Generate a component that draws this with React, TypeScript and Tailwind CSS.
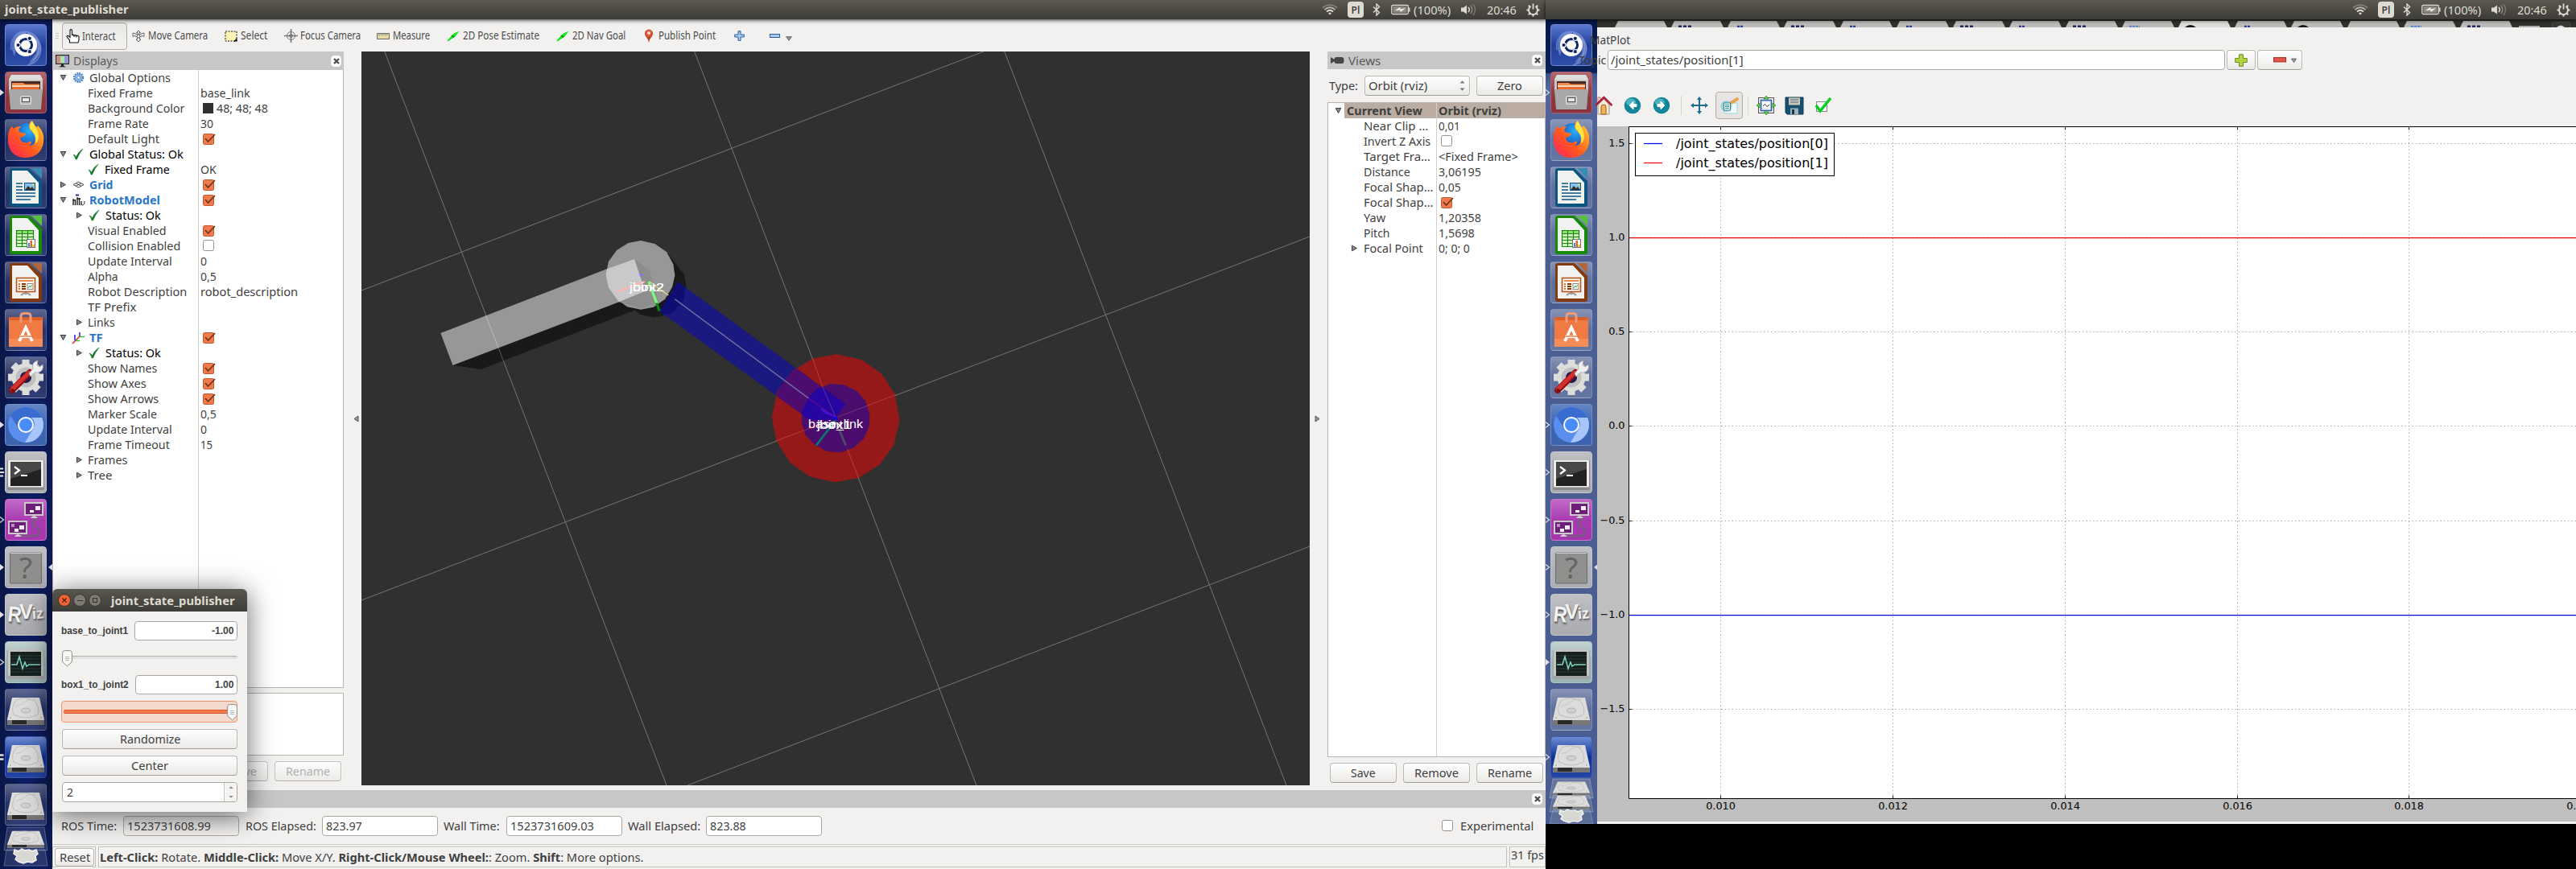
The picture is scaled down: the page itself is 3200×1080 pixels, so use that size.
import React, { useLayoutEffect, useRef, useState } from "react";

/* A line of text squeezed or stretched to a given width. */
function Fit({ w, className = "", children }: { w: number; className?: string; children: React.ReactNode }) {
  const ref = useRef<HTMLSpanElement>(null);
  const [scale, setScale] = useState(1);
  useLayoutEffect(() => {
    if (ref.current) setScale(w / ref.current.offsetWidth);
  }, [w]);
  return (
    <span className={"inline-block shrink-0 whitespace-nowrap text-left " + className} style={{ width: w }}>
      <span ref={ref} className="inline-block origin-left" style={{ transform: `scaleX(${scale})` }}>
        {children}
      </span>
    </span>
  );
}

/* ---------- top panel ---------- */

function Indicators() {
  return (
    <div className="ml-auto flex h-6 shrink-0 items-center pr-[7px] text-[14px] text-[#dfdbd2]">
      <svg width="20" height="16" viewBox="0 0 20 16" fill="none" strokeWidth="1.7">
        <path d="M1 5.5Q10-1.5 19 5.5" stroke="#8a8881" />
        <path d="M3.5 8Q10 2.5 16.500 8" stroke="#b5b2aa" />
        <path d="M6 10.500Q10 7 14 10.500" stroke="#dfdbd2" />
        <path d="M8 12.500Q10 10.500 12 12.500L10 14.500Z" fill="#dfdbd2" />
      </svg>
      <div className="ml-3 flex h-5 w-5 items-center justify-center rounded-sm bg-[#dfdbd2] text-[12px] font-semibold text-[#45433e]">Pl</div>
      <svg className="ml-[11px]" width="10" height="16" viewBox="0 0 10 16" fill="none" stroke="#dfdbd2" strokeWidth="1.4">
        <path d="M1 4.500L8.500 11.500L5 15V1L8.500 4.500L1 11.500" />
      </svg>
      <svg className="ml-[13px]" width="24" height="14" viewBox="0 0 24 14">
        <rect x=".8" y="1.500" width="20.500" height="11" rx="1.500" fill="none" stroke="#dfdbd2" strokeWidth="1.300" />
        <rect x="2.500" y="3.200" width="17" height="7.600" fill="#8c8a83" />
        <path d="M5 8L11 4L12 6.500L18 5L12 10L11 7.500Z" fill="#f3f1ea" />
        <path d="M22.800 4.500V9.500" stroke="#dfdbd2" strokeWidth="1.500" />
      </svg>
      <Fit w={46} className="ml-1">(100%)</Fit>
      <svg className="ml-3" width="21" height="18" viewBox="0 0 21 18" fill="none" strokeWidth="1.500">
        <path d="M1 6.500H4L8 3.500V14.500L4 11.500H1Z" fill="#dfdbd2" />
        <path d="M10 6Q12.500 9 10 12" stroke="#dfdbd2" />
        <path d="M13 4Q16.500 9 13 14" stroke="#8a8881" />
        <path d="M16 2Q21 9 16 16" stroke="#77756e" />
      </svg>
      <Fit w={37} className="ml-3">20:46</Fit>
      <svg className="ml-3" width="17" height="17" viewBox="-8.500 -8.500 17 17" fill="none" stroke="#dfdbd2">
        <path d="M-3-4.600A5.500 5.500 0 1 0 3-4.600" strokeWidth="2" />
        <path d="M0-8V-1" strokeWidth="1.800" />
        <path d="M5 0H8M-5 0H-8M0 5V8M3.600 3.600L5.700 5.700M-3.600 3.600L-5.700 5.700M4-4L5.700-5.700M-4-4L-5.700-5.700" strokeWidth="2" />
      </svg>
    </div>
  );
}

function TopPanel({ title }: { title?: string }) {
  return (
    <div className="relative z-10 flex h-6 shrink-0 items-center bg-linear-to-b from-[#5b594e] to-[#3d3c38] shadow-[0_1px_5px_rgba(0,0,0,0.8)]">
      {title && <Fit w={154} className="ml-[6px] text-[14px] font-bold leading-5 text-[#dfdbd2]">{title}</Fit>}
      <Indicators />
    </div>
  );
}

/* ---------- launcher ---------- */

function Disk() {
  return (
    <g>
      <path d="M9 11H43L49 38V44Q49 45 48 45H4Q3 45 3 44V38Z" fill="#dcdcdb" />
      <path d="M3 38H49V44Q49 45 48 45H4Q3 45 3 44Z" fill="#777" />
      <path d="M9 39H27V44H9Z" fill="#292929" />
      <path d="M3 38.500H49" stroke="#f5f5f5" strokeWidth=".8" />
      <path d="M14 14Q26 9 37 15Q44 25 41 32Q26 40 11 32Q7 24 14 14Z" fill="none" stroke="#bdbdbc" />
      <path d="M13 22Q22 20 27 15Q31 12 39 13" fill="none" stroke="#c4c4c3" />
      <ellipse cx="26" cy="27" rx="5.800" ry="3" fill="#d0d0cf" stroke="#b3b3b2" />
      <circle cx="7" cy="36" r=".8" fill="#999" />
      <circle cx="45" cy="36" r=".8" fill="#999" />
    </g>
  );
}

function Doc({ dark, mid, children }: { dark: string; mid: string; children: React.ReactNode }) {
  return (
    <g>
      <path d="M9 2H30L46 18V47Q46 50 43 50H9Q6 50 6 47V5Q6 2 9 2Z" fill={dark} />
      <path d="M33 2H46V15Z" fill={mid} />
      <path d="M9 5H28L42 20V46H9Z" fill="#f2f2f1" />
      {children}
    </g>
  );
}

type IconName =
  | "ubuntu" | "files" | "firefox" | "writer" | "calc" | "impress" | "software" | "settings"
  | "chromium" | "terminal" | "remote" | "unknown" | "rviz" | "monitor" | "disk";

function IconArt({ name }: { name: IconName }) {
  switch (name) {
    case "ubuntu":
      return (
        <g fill="none">
          <path d="M8 32C4 10 30 0 42 20C48 32 44 48 28 51C48 42 46 14 28 11" stroke="#8ea2dd" strokeOpacity=".6" strokeWidth="1.500" />
          <path d="M12 40C4 24 12 8 28 10L18 16Z" fill="#b3c1ee" fillOpacity=".4" />
          <path d="M38 16C50 26 46 42 30 48L39 36Z" fill="#b3c1ee" fillOpacity=".4" />
          <circle cx="26" cy="26" r="14" fill="#fff" />
          <circle cx="26" cy="26" r="7.600" stroke="#0c2463" strokeWidth="3" />
          <g fill="#0c2463" stroke="#fff" strokeWidth="1.200">
            <circle cx="16.500" cy="26" r="2.700" />
            <circle cx="30.800" cy="17.800" r="2.700" />
            <circle cx="30.800" cy="34.200" r="2.700" />
          </g>
        </g>
      );
    case "files":
      return (
        <g>
          <path d="M8 4H44L47 10V26H5V10Z" fill="#c9c9c8" />
          <path d="M8 4H44L47 10H5Z" fill="#dededd" />
          <rect x="8" y="12" width="36" height="12" fill="#4a2a20" />
          <path d="M9 14H23L25 15.500H43V19H9Z" fill="#f08a4a" />
          <path d="M9 17H43V22H9Z" fill="#fbd9bd" />
          <path d="M9 19H43V23H9Z" fill="#ec6a31" />
          <path d="M5 22H47L45 47H7Z" fill="#a8a8a7" />
          <rect x="19.500" y="30.500" width="13" height="10" rx="2" fill="#b7b7b6" stroke="#d9d9d8" strokeWidth="1.200" />
          <rect x="21.500" y="32.500" width="9" height="5" fill="#e6e6e6" stroke="#555" />
        </g>
      );
    case "firefox":
      return (
        <g>
          <defs>
            <linearGradient id="foxBody" x1="0" y1="1" x2="1" y2="0">
              <stop offset="0" stopColor="#ff1f5c" />
              <stop offset=".45" stopColor="#ff5a1f" />
              <stop offset="1" stopColor="#ffd92e" />
            </linearGradient>
            <radialGradient id="foxGlobe" cx=".6" cy=".3" r=".8">
              <stop offset="0" stopColor="#24b4ff" />
              <stop offset="1" stopColor="#1a35a5" />
            </radialGradient>
          </defs>
          <circle cx="28" cy="21" r="16" fill="url(#foxGlobe)" />
          <path d="M7 11Q9 7 11 12Q13 9 20 9Q16 13 18 16L26 18Q26 21 19 23Q20 29 25 29Q30 30 31 27Q36 29 30 33Q37 34 38 25Q38 19 33 15Q27 9 33 2Q35 7 40 10L41 8Q50 17 48 29Q45 47 26 48Q7 48 4 29Q3 17 7 11Z" fill="url(#foxBody)" />
          <path d="M34 2Q28 9 34 15Q40 21 38 31Q44 25 41 16Q38 9 34 2Z" fill="#fff044" fillOpacity=".9" />
        </g>
      );
    case "writer":
      return (
        <Doc dark="#0b5580" mid="#3a8ab8">
          <path d="M14 21H22M14 25H22M14 29H22M14 33H38M14 37H38M14 41H32" stroke="#0b5580" strokeWidth="1.700" />
          <rect x="24.500" y="20.500" width="13" height="9" fill="#8ac4e8" stroke="#0b5580" />
          <path d="M25 29L29 24L32 27L34 25L37 29Z" fill="#333" />
          <circle cx="35.500" cy="22.500" r="1.300" fill="#f5cf3f" />
        </Doc>
      );
    case "calc":
      return (
        <Doc dark="#168a05" mid="#55c140">
          <path d="M14 20H36V41H14Z" fill="#d5f5c8" />
          <path d="M14 20H36V24H14Z" fill="#8fe07a" />
          <path d="M14 20.500H36M14 24.500H36M14 28.500H36M14 32.500H36M14 36.500H36M14 40.500H36M14.500 20V41M21.500 20V41M28.500 20V41M35.500 20V41" stroke="#168a05" strokeWidth="1.200" />
          <rect x="27.500" y="31.500" width="10" height="10" fill="#fff" stroke="#777" />
          <path d="M29 36H31V41H29Z" fill="#2aa5dc" />
          <path d="M31.500 33H34V41H31.500Z" fill="#e0672a" />
          <path d="M34.500 38H37V41H34.500Z" fill="#f0c030" />
        </Doc>
      );
    case "impress":
      return (
        <Doc dark="#843a0c" mid="#b0683a">
          <path d="M26 38V41M20 42Q26 36 32 42" stroke="#999" strokeWidth="2" fill="none" />
          <rect x="14.500" y="20.500" width="23" height="17" fill="#fff6ee" stroke="#b3571c" strokeWidth="1.600" />
          <path d="M17 24H35" stroke="#e0762f" strokeWidth="1.600" />
          <path d="M17 28H19M17 31H19M17 34H19" stroke="#e0762f" strokeWidth="2" />
          <path d="M21 28H26M21 31H26M21 34H26" stroke="#843a0c" strokeWidth="2" />
          <rect x="28" y="27.500" width="7" height="7" fill="#fff" stroke="#888" />
          <path d="M29 33L31 30L32 32L34 29" stroke="#3da53d" fill="none" />
        </Doc>
      );
    case "software":
      return (
        <g>
          <path d="M5 10H47V47H5Z" fill="#f07a41" />
          <path d="M5 37H47V47H5Z" fill="#f68d58" />
          <path d="M5 10H47L46 14H6Z" fill="#d8602b" />
          <path d="M20 17V9Q20 5.500 24 5.500H28Q32 5.500 32 9V17" fill="none" stroke="#f09a78" strokeWidth="3" />
          <path d="M18 40L26 23L34 40M18 34.500H33" fill="none" stroke="#fff" strokeWidth="3.600" />
          <path d="M17 34H35" stroke="#ee6f35" strokeWidth="1.300" />
        </g>
      );
    case "settings":
      return (
        <g>
          <g stroke="#dddddc" strokeWidth="9">
            <path d="M26 4V48M4 26H48M10.500 10.500L41.500 41.500M41.500 10.500L10.500 41.500" />
          </g>
          <circle cx="26" cy="26" r="17.500" fill="#dddddc" />
          <circle cx="26" cy="26" r="12.500" fill="#bfbfc0" />
          <circle cx="26" cy="26" r="7" fill="#14204f" />
          <path d="M9 42L31 20" stroke="#8c1015" strokeWidth="8" strokeLinecap="round" />
          <path d="M9 41L30 20" stroke="#d8302f" strokeWidth="5" strokeLinecap="round" />
          <path d="M30 21L35 15Q33 7 41 5L40 11L43 13L47 10Q49 18 41 20L37 20L32 25Z" fill="#efefee" stroke="#a5a5a4" strokeWidth=".8" />
          <circle cx="9.500" cy="42" r="2" fill="#651013" />
        </g>
      );
    case "chromium":
      return (
        <g>
          <circle cx="26" cy="26" r="22" fill="#5a8fee" />
          <path d="M7 15A22 22 0 0 1 46 17H26A10 10 0 0 0 17 30Z" fill="#3a6cd0" />
          <path d="M46 17A22 22 0 0 1 25 48L35 31A10 10 0 0 0 33 17Z" fill="#a7c4fb" />
          <circle cx="26" cy="26" r="10" fill="#fff" />
          <circle cx="26" cy="26" r="8" fill="#4a8cf5" />
        </g>
      );
    case "terminal":
      return (
        <g>
          <rect x="3" y="10" width="46" height="38" rx="2" fill="#8a8a8a" />
          <rect x="4" y="10.500" width="44" height="34" rx="1" fill="#ececeb" />
          <rect x="7" y="13" width="38" height="30" fill="#222" />
          <path d="M7 13H45V22L7 34Z" fill="#484848" />
          <path d="M12 19L18 23.500L12 28M20 30H28" fill="none" stroke="#fff" strokeWidth="2.200" />
        </g>
      );
    case "remote":
      return (
        <g>
          <path d="M42 25Q30 27 36 33Q46 39 41 45Q36 47 20 46" fill="none" stroke="#6e6376" strokeWidth="2" />
          <rect x="25" y="5" width="22" height="15" fill="#6d1f78" stroke="#c9c9c8" strokeWidth="2" />
          <path d="M32 24Q36 18 41 24Z" fill="#d0d0cf" />
          <rect x="5" y="28" width="22" height="15" fill="#6d1f78" stroke="#c9c9c8" strokeWidth="2" />
          <path d="M12 47Q16 41 21 47Z" fill="#d0d0cf" />
          <path d="M31 14H36V17H31ZM38 9H44V14H38ZM18 33H24V38H18ZM12 37H17V41H12Z" fill="#f6eef7" />
          <path d="M8 31H12V35H8Z" fill="#c38acb" />
        </g>
      );
    case "unknown":
      return (
        <g>
          <rect x="6.500" y="8" width="39" height="38" rx="1" fill="#8f8f8e" stroke="#6c6c6c" />
          <path d="M7 8.500H45" stroke="#cfcfcf" />
          <text x="26" y="40" textAnchor="middle" fontSize="37" fontFamily="Noto Sans" fill="#636363">?</text>
        </g>
      );
    case "rviz":
      return (
        <g fontFamily="Liberation Sans" fontWeight="bold" fill="#f2f2f2" style={{ textShadow: "1px 2px 2px #555" }}>
          <text x="4" y="35" fontSize="27" transform="rotate(6 12 26)" textLength="17" lengthAdjust="spacingAndGlyphs">R</text>
          <text x="18" y="31" fontSize="25" textLength="17" lengthAdjust="spacingAndGlyphs">V</text>
          <text x="34" y="31" fontSize="19" transform="rotate(-5 38 26)" textLength="14" lengthAdjust="spacingAndGlyphs">iz</text>
        </g>
      );
    case "monitor":
      return (
        <g>
          <rect x="3" y="10" width="46" height="37" rx="1.500" fill="#a2a3a2" />
          <rect x="4" y="10" width="44" height="33" rx="1" fill="#c4c4c3" />
          <rect x="7" y="13" width="38" height="30" fill="#14211f" />
          <path d="M7 18H45M7 22H45M7 26H45M7 34H45M7 38H45" stroke="#2c3b39" />
          <path d="M8 29H15L18 19L22 34L25 26L27 31L30 29H44" fill="none" stroke="#7fd8bd" strokeWidth="1.500" />
        </g>
      );
    case "disk":
      return <Disk />;
  }
}

type Arrow = "solid" | "open" | "multi" | "two" | "";
type Item = { icon: IconName; tile: string; left: Arrow; right?: boolean };

const TILE = {
  plain: "bg-linear-to-b from-[#ffffff55] via-[#ffffff1c] to-[#ffffff26] border-[#ffffff30]",
  blue: "bg-linear-to-b from-[#5b79d0] via-[#223f9c] to-[#2e4fa8] border-[#6f88cc]",
  red: "bg-linear-to-b from-[#b2696f] via-[#8e3c46] to-[#8a3340] border-[#a9636b]",
  sky: "bg-linear-to-b from-[#6585c4] via-[#3a65b6] to-[#3c63ad] border-[#7391ca]",
  gray: "bg-linear-to-b from-[#bfc0c4] via-[#b2b3b8] to-[#abacb0] border-[#c5c6ca]",
  purple: "bg-linear-to-b from-[#c069c8] via-[#a93bb1] to-[#a536ae] border-[#c876ce]",
  teal: "bg-linear-to-b from-[#c2d2d0] via-[#9fb5b4] to-[#9bb3b1] border-[#b4c6c4]",
  deep: "bg-linear-to-b from-[#6f8bd4] via-[#0e2f96] to-[#2445a2] border-[#3c5ab4]",
};

const LEFT_ITEMS: Item[] = [
  { icon: "ubuntu", tile: TILE.blue, left: "" },
  { icon: "files", tile: TILE.red, left: "solid" },
  { icon: "firefox", tile: TILE.plain, left: "" },
  { icon: "writer", tile: TILE.plain, left: "" },
  { icon: "calc", tile: TILE.plain, left: "" },
  { icon: "impress", tile: TILE.plain, left: "" },
  { icon: "software", tile: TILE.plain, left: "" },
  { icon: "settings", tile: TILE.plain, left: "" },
  { icon: "chromium", tile: TILE.sky, left: "solid" },
  { icon: "terminal", tile: TILE.gray, left: "multi" },
  { icon: "remote", tile: TILE.purple, left: "open" },
  { icon: "unknown", tile: TILE.gray, left: "solid", right: true },
  { icon: "rviz", tile: TILE.gray, left: "solid" },
  { icon: "monitor", tile: TILE.teal, left: "open" },
  { icon: "disk", tile: TILE.plain, left: "" },
  { icon: "disk", tile: TILE.deep, left: "two" },
  { icon: "disk", tile: TILE.plain, left: "" },
];

const RIGHT_ARROWS: Arrow[] = ["", "open", "", "", "", "", "", "", "open", "open", "open", "open", "open", "solid", "", "open"];
const RIGHT_ITEMS: Item[] = RIGHT_ARROWS.map((left, i) => ({ ...LEFT_ITEMS[i], left }));

function ArrowMark({ kind }: { kind: Arrow }) {
  return (
    <svg width="6" height="14" viewBox="0 0 6 14" className="shrink-0">
      {kind === "solid" && <path d="M0 3L5 7L0 11Z" fill="#dfdfe2" />}
      {kind === "open" && <path d="M0 3.500L4.500 7L0 10.500" fill="none" stroke="#dfdfe2" strokeWidth="1.200" />}
      {kind === "multi" && <path d="M0 2.500H4M0 7H5M0 11.500H4" stroke="#dfdfe2" strokeWidth="2" />}
      {kind === "two" && <path d="M0 4.500H4.500M0 9.500H4.500" stroke="#dfdfe2" strokeWidth="2.400" />}
    </svg>
  );
}

function Trash() {
  return (
    <path d="M12 1L17 3L21 0L25 2L30 1L34 3L39 1L41 6L38 9L39 14L34 17L28 16L23 18L17 16L13 13L15 9L11 6Z" fill="#d7d8d3" stroke="#f3f3f0" strokeWidth="1.500" />
  );
}

function Launcher({ items, folded, className }: { items: Item[]; folded: number; className: string }) {
  return (
    <div className={"flex shrink-0 flex-col overflow-hidden pt-1.5 " + className}>
      {items.map((it, i) => (
        <div key={i} className="mb-[7px] flex h-[52px] shrink-0 items-center">
          <ArrowMark kind={it.left} />
          <div className={"h-[52px] w-[52px] shrink-0 rounded border " + it.tile}>
            <svg width="52" height="52" viewBox="0 0 52 52" className="-m-px">
              <IconArt name={it.icon} />
            </svg>
          </div>
          {it.right && (
            <svg width="6" height="10" viewBox="0 0 6 10" className="ml-px shrink-0">
              <path d="M6 1L1 5L6 9Z" fill="#dfdfe2" />
            </svg>
          )}
        </div>
      ))}
      <svg width="64" height={folded === 1 ? 55 : 58} viewBox={folded === 1 ? "0 0 64 55" : "0 0 64 58"} className="-mt-[7px] shrink-0">
        {folded === 1 ? (
          <g>
            <path d="M9 2H55L59 31H5Z" fill="#fff" fillOpacity=".12" stroke="#fff" strokeOpacity=".25" />
            <path d="M8 30H56L59 50H5Z" fill="#fff" fillOpacity=".12" stroke="#fff" strokeOpacity=".25" />
            <g transform="translate(6 0) scale(1 .61)"><Disk /></g>
            <g transform="translate(6 29)"><Trash /></g>
          </g>
        ) : (
          <g>
            <path d="M9 1H55L59 25H5Z" fill="#fff" fillOpacity=".15" stroke="#fff" strokeOpacity=".25" />
            <path d="M9 22H55L59 42H5Z" fill="#fff" fillOpacity=".1" stroke="#fff" strokeOpacity=".25" />
            <path d="M9 40H55L59 57H5Z" fill="#fff" fillOpacity=".1" stroke="#fff" strokeOpacity=".25" />
            <g transform="translate(6 16) scale(1 .5)"><Disk /></g>
            <g transform="translate(6 -1) scale(1 .5)"><Disk /></g>
            <g transform="translate(6 39) scale(1 .9)"><Trash /></g>
          </g>
        )}
      </svg>
    </div>
  );
}

/* ---------- shared widgets ---------- */

const BOX = "flex items-center rounded border border-[#b9b6b1] border-b-[#a19e99] bg-linear-to-b from-white to-[#ebeae8] shadow-[0_0_0_1px_#f7f6f5]";
const BTN = BOX + " justify-center";
const FIELD = "flex items-center rounded border border-[#aaa7a2] bg-white";

function CloseButton() {
  return (
    <div className="flex h-[14px] w-[13px] items-center justify-center rounded-[4px] border border-[#f6f6f6] bg-white">
      <svg width="8" height="8" viewBox="0 0 8 8">
        <path d="M1 1L7 7M7 1L1 7" stroke="#4e4e4e" strokeWidth="2.400" />
      </svg>
    </div>
  );
}

function Check({ on }: { on: boolean }) {
  return (
    <svg width="18" height="17" viewBox="0 0 18 17" className="shrink-0">
      {on ? (
        <g>
          <rect x="1.500" y="2.500" width="13" height="13" rx="1.800" fill="#ee7a4d" stroke="#c2572c" />
          <path d="M4 8L7.500 12L16 3" fill="none" stroke="#703619" strokeWidth="1.800" />
        </g>
      ) : (
        <rect x="1.500" y="1.500" width="13" height="13" rx="2" fill="#fff" stroke="#96938e" />
      )}
    </svg>
  );
}

function Expander({ open }: { open: boolean }) {
  return (
    <svg width="9" height="9" viewBox="0 0 9 9" className="shrink-0">
      <path d={open ? "M1.200 1.500H7.800L4.500 7.500Z" : "M1.500 1.200V7.800L7.500 4.500Z"} fill="#8a8a89" stroke="#3e3e3e" />
    </svg>
  );
}

function RowIcon({ kind }: { kind: string }) {
  if (kind === "ok")
    return (
      <svg width="15" height="15" viewBox="0 0 15 15" className="shrink-0">
        <path d="M1 8Q3 8 4.500 11Q7 5 13 1Q8 7 5.500 14H4Q3 10 1 8Z" fill="#15782a" stroke="#15782a" strokeWidth=".6" />
      </svg>
    );
  if (kind === "gear")
    return (
      <svg width="15" height="15" viewBox="0 0 15 15" className="shrink-0" fill="none" stroke="#4a83c3">
        <circle cx="7.500" cy="7.500" r="5.700" strokeWidth="2" strokeDasharray="1.800 1.200" />
        <circle cx="7.500" cy="7.500" r="4.600" fill="#9fc0e6" />
        <circle cx="7.500" cy="7.500" r="2" fill="#fff" />
      </svg>
    );
  if (kind === "grid")
    return (
      <svg width="15" height="15" viewBox="0 0 15 15" className="shrink-0" fill="none" stroke="#444">
        <path d="M1 7.500L7.500 4L14 7.500L7.500 11ZM4.300 5.700L10.800 9.300M10.800 5.700L4.300 9.300" />
      </svg>
    );
  if (kind === "robot")
    return (
      <svg width="16" height="16" viewBox="0 0 16 16" className="shrink-0" fill="none" stroke="#222">
        <path d="M4 1.500H8" stroke="#2b3f9c" strokeWidth="2.200" />
        <path d="M1 6V14M3.500 7V14M6 4V14M8.500 5V14M11 9V14M1 8H4M6 6H10" strokeWidth="1.400" />
        <path d="M12 14Q15 14 15 9" />
      </svg>
    );
  return (
    <svg width="17" height="16" viewBox="0 0 17 16" className="-ml-px shrink-0" fill="none" strokeWidth="1.500">
      <path d="M1 15L5 11L10 6" stroke="#e3211c" />
      <path d="M4 4V11M10 1V6" stroke="#2424e8" />
      <path d="M5 11.500H10M10 6.500H16" stroke="#27c427" />
    </svg>
  );
}

type Row = {
  pad: string;
  open?: boolean;
  icon?: string;
  name: string;
  w: number;
  tone?: string;
  value?: string;
  vw?: number;
  check?: boolean;
  swatch?: boolean;
};

/* Left padding of each kind of row, measured from the tree's inner edge. */
const P0 = "pl-[8px]";
const P1 = "pl-[43px]";
const P1A = "pl-[28px]";
const BLUE = "font-bold text-[#2a76c6]";

const DISPLAY_ROWS: Row[] = [
  { pad: P0, open: true, icon: "gear", name: "Global Options", w: 101 },
  { pad: P1, name: "Fixed Frame", w: 81, value: "base_link", vw: 62 },
  { pad: P1, name: "Background Color", w: 120, value: "48; 48; 48", vw: 64, swatch: true },
  { pad: P1, name: "Frame Rate", w: 76, value: "30", vw: 16 },
  { pad: P1, name: "Default Light", w: 89, check: true },
  { pad: P0, open: true, icon: "ok", name: "Global Status: Ok", w: 117, tone: "text-black" },
  { pad: P1, icon: "ok", name: "Fixed Frame", w: 81, tone: "text-black", value: "OK", vw: 20 },
  { pad: P0, open: false, icon: "grid", name: "Grid", w: 29, tone: BLUE, check: true },
  { pad: P0, open: true, icon: "robot", name: "RobotModel", w: 88, tone: BLUE, check: true },
  { pad: P1A, open: false, icon: "ok", name: "Status: Ok", w: 69, tone: "text-black" },
  { pad: P1, name: "Visual Enabled", w: 98, check: true },
  { pad: P1, name: "Collision Enabled", w: 115, check: false },
  { pad: P1, name: "Update Interval", w: 105, value: "0", vw: 8 },
  { pad: P1, name: "Alpha", w: 38, value: "0,5", vw: 20 },
  { pad: P1, name: "Robot Description", w: 123, value: "robot_description", vw: 121 },
  { pad: P1, name: "TF Prefix", w: 60 },
  { pad: P1A, open: false, name: "Links", w: 34 },
  { pad: P0, open: true, icon: "tf", name: "TF", w: 17, tone: BLUE, check: true },
  { pad: P1A, open: false, icon: "ok", name: "Status: Ok", w: 69, tone: "text-black" },
  { pad: P1, name: "Show Names", w: 86, check: true },
  { pad: P1, name: "Show Axes", w: 73, check: true },
  { pad: P1, name: "Show Arrows", w: 88, check: true },
  { pad: P1, name: "Marker Scale", w: 86, value: "0,5", vw: 20 },
  { pad: P1, name: "Update Interval", w: 105, value: "0", vw: 8 },
  { pad: P1, name: "Frame Timeout", w: 102, value: "15", vw: 15 },
  { pad: P1A, open: false, name: "Frames", w: 49 },
  { pad: P1A, open: false, name: "Tree", w: 30 },
];

function Value({ r }: { r: Row }) {
  return (
    <>
      {r.swatch && <span className="mr-[4px] ml-[3px] h-[13px] w-[13px] shrink-0 bg-[#303030]" />}
      {r.check !== undefined && <span className="ml-[2px] flex"><Check on={r.check} /></span>}
      {r.value && <Fit w={r.vw ?? 20}>{r.value}</Fit>}
    </>
  );
}

function DisplayTree() {
  return (
    <div className="flex h-[768px] flex-col border border-t-0 border-[#b9b6b0] bg-white">
      <div className="flex h-full">
        <div className="w-[181px] shrink-0 border-r border-[#d2d0cd]">
          {DISPLAY_ROWS.map((r, i) => (
            <div key={i} className={"flex h-[19px] items-center " + r.pad + " " + (r.tone ?? "")}>
              {r.open !== undefined && <Expander open={r.open} />}
              {r.icon && (
                <span className={"flex w-[21px] shrink-0 " + (r.open === undefined ? "" : "ml-[7px]")}>
                  <RowIcon kind={r.icon} />
                </span>
              )}
              {!r.icon && r.open !== undefined && <span className="w-[6px] shrink-0" />}
              <Fit w={r.w}>{r.name}</Fit>
            </div>
          ))}
        </div>
        <div className="grow pl-[2px]">
          {DISPLAY_ROWS.map((r, i) => (
            <div key={i} className="flex h-[19px] items-center">
              <Value r={r} />
            </div>
          ))}
        </div>
      </div>
    </div>
  );
}

/* ---------- rviz toolbar ---------- */

function Tool({ gap, w, label, children }: { gap: string; w: number; label: string; children: React.ReactNode }) {
  return (
    <div className={"flex shrink-0 items-center " + gap}>
      <span className="flex w-[20px] shrink-0">{children}</span>
      <Fit w={w}>{label}</Fit>
    </div>
  );
}

function GreenArrow() {
  return (
    <svg width="16" height="16" viewBox="0 0 16 16">
      <path d="M.5 13.500L8 5L15.500 1.500L11 8L1.500 14.500Z" fill="#18e61c" />
      <path d="M6 7L9 9.500" stroke="#0a6d12" strokeWidth="1.300" />
    </svg>
  );
}

function Toolbar() {
  return (
    <div className="flex h-10 shrink-0 items-center bg-[#f2f1f0] pt-px pl-[4px] text-[13.5px] text-[#4c4c4c]">
      <div className="flex w-[8px] flex-col gap-[2px]">
        <i className="h-px w-[4px] bg-[#c5c4c2]" />
        <i className="h-px w-[4px] bg-[#c5c4c2]" />
        <i className="h-px w-[4px] bg-[#c5c4c2]" />
      </div>
      <div className="flex h-[34px] w-[81px] items-center rounded border border-[#aeaba6] bg-linear-to-b from-[#e9e8e6] to-[#f4f3f2] pl-[4px] shadow-[0_0_0_1px_#f8f7f6]">
        <svg width="18" height="18" viewBox="0 0 18 18" fill="#fff" stroke="#111" strokeWidth="1.100">
          <path d="M4.500 17V14L1 9.500Q1 8 3 8.500L5 10.500V2Q5 .6 6.200.6T7.500 2V7.500Q9 6.500 10 8Q11.500 7 12.500 8.500Q14.500 7.500 16 9.500V14L15 17Z" />
          <path d="M10 8V10M12.700 8.500V10.500" />
        </svg>
        <Fit w={42} className="mt-px ml-[2px]">Interact</Fit>
      </div>
      <Tool gap="ml-[6px]" w={74} label="Move Camera">
        <svg width="16" height="16" viewBox="0 0 16 16" fill="#eee" stroke="#666">
          <path d="M8 1L10.500 3.500H9V6L13 4.500L15 4V8.500L13 7.500L9.500 9V12H11L8 15L5 12H6.500V9L3 7.500L1 8.500V4L3 4.500L7 6V3.500H5.500Z" />
          <circle cx="8" cy="8" r="2" />
        </svg>
      </Tool>
      <Tool gap="ml-[21px]" w={33} label="Select">
        <svg width="16" height="14" viewBox="0 0 16 14">
          <rect x="1" y="1" width="14" height="12" fill="#fcf3b5" stroke="#111" strokeDasharray="2 1.500" />
          <path d="M15.500 9V13.500H11Z" fill="#111" />
        </svg>
      </Tool>
      <Tool gap="ml-[21px]" w={75} label="Focus Camera">
        <svg width="17" height="17" viewBox="0 0 17 17" fill="none" stroke="#777">
          <circle cx="8.500" cy="8.500" r="5" />
          <circle cx="8.500" cy="8.500" r="2" />
          <path d="M8.500 0V17M0 8.500H17" strokeWidth="1.600" />
        </svg>
      </Tool>
      <Tool gap="ml-[20px]" w={46} label="Measure">
        <svg width="16" height="8" viewBox="0 0 16 8">
          <rect x=".6" y=".6" width="14.800" height="6.800" fill="#ecdfa5" stroke="#666" />
          <path d="M3 1V4M5 1V3M7 1V4M9 1V3M11 1V4M13 1V3" stroke="#777" strokeWidth=".7" />
        </svg>
      </Tool>
      <Tool gap="ml-[21px]" w={95} label="2D Pose Estimate"><GreenArrow /></Tool>
      <Tool gap="ml-[21px]" w={66} label="2D Nav Goal"><GreenArrow /></Tool>
      <Tool gap="ml-[21px]" w={71} label="Publish Point">
        <svg width="16" height="18" viewBox="0 0 16 18">
          <path d="M8 17Q7 12 4 9Q2 5 4 2.500Q8-1.500 12 2.500Q14 5 12 9Q9 12 8 17Z" fill="#b34528" />
          <path d="M8 .8Q4 1 3.500 5Q4 8 6 10L10 9.500Q13 6 12 3Q10.500 1 8 .8Z" fill="#e45635" />
          <circle cx="8" cy="5" r="2" fill="#fbdccf" />
        </svg>
      </Tool>
      <svg className="ml-[23px]" width="13" height="13" viewBox="0 0 13 13" fill="#a9cbf0" stroke="#2d5f9f">
        <path d="M5 .7H8V5H12.300V8H8V12.300H5V8H.7V5H5Z" />
      </svg>
      <svg className="ml-[31px]" width="13" height="5" viewBox="0 0 13 5">
        <rect x=".5" y=".5" width="12" height="4" fill="#a9cbf0" stroke="#2d5f9f" />
      </svg>
      <svg className="mt-[6px] ml-[7px]" width="8" height="6" viewBox="0 0 8 6">
        <path d="M.7.7H7.300L4 5.300Z" fill="#999" stroke="#666" />
      </svg>
    </div>
  );
}

/* ---------- 3D viewport ---------- */

function Viewport() {
  return (
    <svg width="1178" height="912" viewBox="449 64 1178 912" className="shrink-0 bg-[#303030]">
      <g stroke="#757575" strokeWidth="1">
        <path d="M477.700 64L828 976M862.700 64L1213 976M1247.800 64L1598 976" />
        <path d="M449 361L1222 64M449 746L1627 294M854 976L1627 679" />
      </g>
      <g transform="translate(520 280) scale(.408163 .333333)">
        <polygon points="104,522 190,537 655,318 695,244 640,270" fill="#191919" />
        <polygon points="757,103 808,183 815,230 806,282 770,330 716,344 676,333 640,300" fill="#191919" />
        <polygon points="789,211 1299,667 1265,725 1230,760 733,320" fill="#191980" />
        <polygon points="789,211 812,232 806,282 770,330 745,330 733,320" fill="#0d0d72" />
        <polygon points="1273,481 1348,501 1410,554 1450,630 1464,727 1447,818 1404,892 1339,942 1266,958 1190,937 1130,884 1089,804 1075,715 1091,620 1135,545 1201,496" fill="#951919" />
        <polygon points="1152,535 1299,667 1265,725 1230,760 1089,637 1100,602 1135,545" fill="#4d0c70" />
        <polygon points="1254,591 1295,595 1333,617 1360,655 1373,705 1371,750 1355,795 1325,829 1286,847 1243,843 1206,819 1178,782 1165,733 1168,690 1187,642 1215,608" fill="#4a0d6e" />
        <polygon points="1230,604 1299,667 1265,725 1190,727 1165,705 1168,690 1187,642 1215,608" fill="#2605a0" />
        <path d="M780,275L1187,645" stroke="#70709f" strokeWidth="4" />
        <path d="M1187,645L1270,718" stroke="#4d0a96" strokeWidth="6" />
        <path d="M1225,684L1268,714L1236,700Z" fill="#4810d8" stroke="#4810d8" strokeWidth="4" />
        <g stroke="#ff9a9a" strokeOpacity=".28" strokeWidth="2.500">
          <path d="M1199,496L1232,610M1305,835L1339,942M1087,804L1190,757M1275,715L1452,632M1232,610L1270,717" />
        </g>
        <polygon points="676,57 719,69 755,100 775,145 780,187 772,230 750,275 715,305 676,314 635,304 603,275 578,232 570,185 578,135 603,93 638,66" fill="#979797" />
        <polygon points="67,402 573,163 657,126 690,244 610,286 104,522" fill="#979797" />
        <polygon points="573,163 657,126 690,246 610,286 578,232 570,185" fill="#c9c9c9" />
        <polygon points="657,126 703,170 713,212 733,288 676,310 650,300 610,286 690,246" fill="#8d8d8d" />
        <path d="M205,337L243,457" stroke="#b9b9b9" strokeWidth="2.500" />
        <path d="M243,457L258,505" stroke="#555" strokeWidth="2.500" />
        <path d="M688,210L603,249" stroke="#ffb3b3" strokeWidth="7" />
        <path d="M700,210L726,294" stroke="#7cf77c" strokeWidth="8" />
        <path d="M724,290L733,320" stroke="#0a850f" strokeWidth="8" />
        <path d="M703,210L760,261" stroke="#dcd58b" strokeWidth="3.500" />
        <circle cx="677" cy="185" r="5" fill="#7878ff" />
        <path d="M1268,728L1210,821" stroke="#067a70" strokeWidth="7" />
        <path d="M1280,760L1300,821" stroke="#4c4a68" strokeWidth="7" />
        <path d="M1188,757L1225,744" stroke="#a00a45" strokeWidth="7" />
        <circle cx="1268" cy="719" r="6" fill="#0c00e8" />
      </g>
      <g fontFamily="Liberation Sans" fontSize="15" fill="#fff">
        <text x="782" y="362" textLength="43" lengthAdjust="spacingAndGlyphs">joint2</text>
        <text x="786" y="362" textLength="39" lengthAdjust="spacingAndGlyphs">box2</text>
        <text x="1004" y="532" textLength="68" lengthAdjust="spacingAndGlyphs">base_link</text>
        <text x="1015" y="533" textLength="42" lengthAdjust="spacingAndGlyphs">joint1</text>
        <text x="1018" y="533" textLength="40" lengthAdjust="spacingAndGlyphs">box1</text>
      </g>
    </svg>
  );
}

/* ---------- views dock ---------- */

const VIEW_ROWS: Row[] = [
  { pad: "pl-[44px]", name: "Near Clip …", w: 80, value: "0,01", vw: 27 },
  { pad: "pl-[44px]", name: "Invert Z Axis", w: 83, check: false },
  { pad: "pl-[44px]", name: "Target Fra…", w: 83, value: "<Fixed Frame>", vw: 99 },
  { pad: "pl-[44px]", name: "Distance", w: 58, value: "3,06195", vw: 53 },
  { pad: "pl-[44px]", name: "Focal Shap…", w: 86, value: "0,05", vw: 28 },
  { pad: "pl-[44px]", name: "Focal Shap…", w: 86, check: true },
  { pad: "pl-[44px]", name: "Yaw", w: 27, value: "1,20358", vw: 53 },
  { pad: "pl-[44px]", name: "Pitch", w: 33, value: "1,5698", vw: 45 },
  { pad: "pl-[28px]", open: false, name: "Focal Point", w: 74, value: "0; 0; 0", vw: 39 },
];

function ViewsDock() {
  return (
    <div className="flex w-[271px] shrink-0 flex-col">
      <div className="flex h-[22px] items-center bg-[#c7c7c7] pr-[4px] pl-[4px] text-[#5a5a5a]">
        <svg width="17" height="10" viewBox="0 0 17 10" fill="#474747">
          <path d="M0 1L5 4V6L0 9Z" />
          <rect x="4.500" y="1" width="12" height="8" rx="3" />
        </svg>
        <Fit w={40} className="ml-[5px]">Views</Fit>
        <span className="ml-auto"><CloseButton /></span>
      </div>
      <div className="flex h-[41px] items-center pr-[3px] pb-px pl-[2px]">
        <Fit w={36}>Type:</Fit>
        <div className={BOX + " ml-[8px] h-[25px] w-[131px] pr-[5px] pl-[4px]"}>
          <Fit w={73}>Orbit (rviz)</Fit>
          <svg width="7" height="13" viewBox="0 0 7 13" fill="#777" className="ml-auto">
            <path d="M.5 3.500L3.500.3L6.500 3.500ZM.5 9.500L3.500 12.700L6.500 9.500Z" />
          </svg>
        </div>
        <div className={BTN + " ml-auto h-[25px] w-[83px]"}><Fit w={31}>Zero</Fit></div>
      </div>
      <div className="flex h-[814px] border border-[#b9b6b0] bg-white">
        <div className="w-[135px] shrink-0 border-r border-[#d2d0cd]">
          <div className="flex h-[19px] items-center pl-[8px]">
            <Expander open />
            <div className="ml-[3px] flex h-[19px] grow items-center bg-[#baaca0] pl-[3px] font-bold"><Fit w={94}>Current View</Fit></div>
          </div>
          {VIEW_ROWS.map((r, i) => (
            <div key={i} className={"flex h-[19px] items-center " + r.pad}>
              {r.open !== undefined && <span className="mr-[7px] flex"><Expander open={false} /></span>}
              <Fit w={r.w}>{r.name}</Fit>
            </div>
          ))}
        </div>
        <div className="grow">
          <div className="flex h-[19px] items-center bg-[#baaca0] pl-[2px] font-bold"><Fit w={78}>Orbit (rviz)</Fit></div>
          {VIEW_ROWS.map((r, i) => (
            <div key={i} className="flex h-[19px] items-center pl-[2px]"><Value r={r} /></div>
          ))}
        </div>
      </div>
      <div className="mt-[7px] flex justify-between pr-[3px] pl-[3px]">
        <div className={BTN + " h-[25px] w-[83px]"}><Fit w={31}>Save</Fit></div>
        <div className={BTN + " h-[25px] w-[83px]"}><Fit w={55}>Remove</Fit></div>
        <div className={BTN + " h-[25px] w-[83px]"}><Fit w={55}>Rename</Fit></div>
      </div>
    </div>
  );
}

function DisplaysDock() {
  return (
    <div className="flex w-[362px] shrink-0 flex-col">
      <div className="flex h-[23px] items-center bg-[#c7c7c7] pr-[3px] pl-[4px] text-[#5a5a5a]">
        <svg width="17" height="16" viewBox="0 0 17 16">
          <rect x=".7" y=".7" width="15.600" height="10.600" fill="#a8e6ac" stroke="#222" strokeWidth="1.300" />
          <path d="M1.400 1.400H6V10.600H1.400Z" fill="#d08a8a" />
          <path d="M11 1.400H15.600V10.600H11Z" fill="#9a90dc" />
          <path d="M7 11.500H10V13.500L13 15.300H4L7 13.500Z" fill="#222" />
        </svg>
        <Fit w={55} className="ml-[5px]">Displays</Fit>
        <span className="ml-auto"><CloseButton /></span>
      </div>
      <DisplayTree />
      <div className="mt-[6px] h-[78px] border border-[#b9b6b0] bg-white" />
      <div className="mt-[7px] flex justify-end gap-[8px] pr-[3px] text-[#a3a19e]">
        <div className={BTN + " h-[25px] w-[83px] opacity-80"}><Fit w={55}>Remove</Fit></div>
        <div className={BTN + " h-[25px] w-[83px] opacity-80"}><Fit w={55}>Rename</Fit></div>
      </div>
    </div>
  );
}

/* ---------- bottom panels ---------- */

function TimePanel() {
  return (
    <>
      <div className="mt-[6px] flex h-[22px] shrink-0 items-center justify-end bg-[#c7c7c7] pr-[4px]"><CloseButton /></div>
      <div className="flex h-[46px] shrink-0 items-center border-b border-[#cfcdca] pl-[11px]">
        <Fit w={69}>ROS Time:</Fit>
        <div className={FIELD + " ml-[8px] h-[25px] w-[144px] bg-linear-to-b from-[#e2e1e0] to-[#f3f2f1] pl-[4px]"}><Fit w={104}>1523731608.99</Fit></div>
        <Fit w={88} className="ml-[8px]">ROS Elapsed:</Fit>
        <div className={FIELD + " ml-[7px] h-[25px] w-[144px] pl-[4px]"}><Fit w={45}>823.97</Fit></div>
        <Fit w={70} className="ml-[7px]">Wall Time:</Fit>
        <div className={FIELD + " ml-[8px] h-[25px] w-[144px] pl-[4px]"}><Fit w={104}>1523731609.03</Fit></div>
        <Fit w={90} className="ml-[7px]">Wall Elapsed:</Fit>
        <div className={FIELD + " ml-[7px] h-[25px] w-[144px] pl-[4px]"}><Fit w={45}>823.88</Fit></div>
        <span className="mr-[6px] ml-auto flex"><Check on={false} /></span>
        <Fit w={91} className="mr-[15px]">Experimental</Fit>
      </div>
    </>
  );
}

function StatusBar() {
  const frame = "flex h-[26px] items-center border border-[#c3c1be] shadow-[inset_1px_1px_0_#fff]";
  return (
    <div className="flex h-[30px] shrink-0 items-center gap-[3px]">
      <div className={frame + " w-[54px] px-[2px]"}>
        <div className={BTN + " h-[23px] w-[49px] shrink-0"}><Fit w={38}>Reset</Fit></div>
      </div>
      <div className={frame + " w-[1750px] pl-[1px]"}>
        <Fit w={676}>
          <b>Left-Click:</b> Rotate. <b>Middle-Click:</b> Move X/Y. <b>Right-Click/Mouse Wheel:</b>: Zoom. <b>Shift</b>: More options.
        </Fit>
      </div>
      <div className={frame + " w-[45px] pb-[6px] pl-[1px]"}><Fit w={41}>31 fps</Fit></div>
    </div>
  );
}

/* ---------- joint_state_publisher window ---------- */

function Thumb() {
  return (
    <svg width="13" height="21" viewBox="0 0 13 21" className="shrink-0">
      <path d="M3.500.6H9.500Q12.400.6 12.400 3.500V14.500L6.500 20L.6 14.500V3.500Q.6.6 3.500.6Z" fill="#f7f7f6" stroke="#8f8c87" />
      <path d="M4 8.500H9M4 10.500H9M4 12.500H9" stroke="#a9a7a3" strokeWidth=".8" />
    </svg>
  );
}

function JointWindow() {
  const round = "flex h-4 w-4 items-center justify-center rounded-full border border-[#37362f]";
  return (
    <div className="absolute top-[732px] left-[65px] flex h-[277px] w-[242px] flex-col rounded-t-md bg-[#f2f1f0] shadow-[0_4px_34px_rgba(0,0,0,0.6)]">
      <div className="flex h-[28px] shrink-0 items-center gap-[3px] rounded-t-md bg-linear-to-b from-[#59574d] to-[#3d3c38] pl-[7px]">
        <div className={round + " bg-[#ee6237]"}>
          <svg width="6" height="6" viewBox="0 0 6 6"><path d="M.5.5L5.500 5.500M5.500.5L.5 5.500" stroke="#4c1c0c" strokeWidth="1.200" /></svg>
        </div>
        <div className={round + " bg-[#7c7a72]"}><i className="h-px w-[7px] bg-[#33322e]" /></div>
        <div className={round + " bg-[#7c7a72]"}><i className="h-[6px] w-[6px] border border-[#33322e]" /></div>
        <Fit w={154} className="ml-[9px] font-bold text-[#dfdbd2]">joint_state_publisher</Fit>
      </div>
      <div className="flex flex-col pt-[12px] pr-[12px] pl-[11px]">
        <div className="flex h-[24px] items-center justify-between font-['Liberation_Sans',sans-serif] text-[12px] font-bold">
          <Fit w={83}>base_to_joint1</Fit>
          <div className={FIELD + " h-[24px] w-[128px] justify-end pr-[4px]"}><Fit w={27}>-1.00</Fit></div>
        </div>
        <div className="mt-[12px] flex h-[20px] items-center pl-px">
          <Thumb />
          <div className="mb-[2px] h-[4px] grow rounded-r border-t border-[#b5b3b0] bg-[#e2e1df]" />
        </div>
        <div className="mt-[11px] flex h-[24px] items-center justify-between font-['Liberation_Sans',sans-serif] text-[12px] font-bold">
          <Fit w={84}>box1_to_joint2</Fit>
          <div className={FIELD + " h-[24px] w-[127px] justify-end pr-[4px]"}><Fit w={23}>1.00</Fit></div>
        </div>
        <div className="mt-[8px] flex h-[27px] items-center rounded border border-[#f0946f] bg-[#f2d8cd] pl-[2px]">
          <div className="h-[5px] grow rounded-l border-y border-[#d9572a] bg-[#f47b4c]" />
          <div className="-mr-px flex pt-px"><Thumb /></div>
        </div>
        <div className={BTN + " mt-[8px] ml-px h-[25px]"}><Fit w={75}>Randomize</Fit></div>
        <div className={BTN + " mt-[8px] ml-px h-[25px]"}><Fit w={46}>Center</Fit></div>
        <div className={FIELD + " mt-[8px] ml-px h-[25px] pl-[5px]"}>
          <Fit w={8}>2</Fit>
          <div className="ml-auto flex h-full w-[16px] items-center justify-center rounded-r border-l border-[#c9c7c4] bg-[#f5f4f3]">
            <svg width="6" height="15" viewBox="0 0 6 15" fill="#8f8d89"><path d="M.3 3L3 .3L5.700 3ZM.3 12L3 14.700L5.700 12Z" /></svg>
          </div>
        </div>
      </div>
    </div>
  );
}

function LeftScreen() {
  return (
    <div className="flex h-[1080px] w-[1920px] shrink-0 flex-col overflow-hidden">
      <TopPanel title="joint_state_publisher" />
      <div className="flex grow">
        <Launcher items={LEFT_ITEMS} folded={1} className="h-[1056px] w-[65px] bg-linear-to-r from-[#091647] via-[#0d1d63] to-[#0b1953]" />
        <div className="flex w-[1855px] flex-col bg-[#f2f1f0]">
          <Toolbar />
          <div className="flex h-[912px] shrink-0">
            <DisplaysDock />
            <div className="flex w-[22px] items-center justify-center pl-[8px]">
              <svg width="7" height="9" viewBox="0 0 7 9"><path d="M6 1V8L1 4.500Z" fill="#999" stroke="#555" /></svg>
            </div>
            <Viewport />
            <div className="flex w-[22px] items-center pl-[6px]">
              <svg width="7" height="9" viewBox="0 0 7 9"><path d="M1 1V8L6 4.500Z" fill="#999" stroke="#555" /></svg>
            </div>
            <ViewsDock />
          </div>
          <TimePanel />
          <StatusBar />
        </div>
      </div>
      <JointWindow />
    </div>
  );
}

/* ---------- right screen: plot window ---------- */

const X_TICKS = [
  { x: 2137.500, label: "0.010" },
  { x: 2351.500, label: "0.012" },
  { x: 2565.500, label: "0.014" },
  { x: 2779.500, label: "0.016" },
  { x: 2992.500, label: "0.018" },
  { x: 3206.500, label: "0.020" },
];
const Y_TICKS = [
  { y: 178.500, label: "1.5" },
  { y: 295.500, label: "1.0" },
  { y: 412.500, label: "0.5" },
  { y: 529.500, label: "0.0" },
  { y: 647.500, label: "−0.5" },
  { y: 764.500, label: "−1.0" },
  { y: 881.500, label: "−1.5" },
];

function Plot() {
  return (
    <svg width="1216" height="864" viewBox="1984 157 1216 864" className="block shrink-0 bg-[#bfbfbf]" fontFamily="DejaVu Sans">
      <rect x="2023" y="157" width="1177" height="836" fill="#fff" />
      <g stroke="#999" strokeDasharray="1.200 3.200">
        {X_TICKS.map((t) => <path key={t.x} d={`M${t.x} 992V158`} />)}
        {Y_TICKS.map((t) => <path key={t.y} d={`M2024 ${t.y}H3200`} />)}
      </g>
      <g stroke="#222">
        {X_TICKS.map((t) => <path key={t.x} d={`M${t.x} 158V161.500M${t.x} 992V988.500`} />)}
        {Y_TICKS.map((t) => <path key={t.y} d={`M2024 ${t.y}H2027.500`} />)}
      </g>
      <g strokeWidth="1.250">
        <path d="M2024 295.500H3200" stroke="#f00" />
        <path d="M2024 764.500H3200" stroke="#00f" />
      </g>
      <g strokeWidth=".6" strokeDasharray="1.200 3.200" stroke="#000" strokeOpacity=".6">
        <path d="M2024 295.500H3200M2024 764.500H3200" />
      </g>
      <path d="M3200 157.500H2023.500V992.500H3200" fill="none" stroke="#000" />
      <g fontSize="12.800" fill="#000">
        {X_TICKS.map((t) => <text key={t.x} x={t.x} y="1006" textAnchor="middle">{t.label}</text>)}
        {Y_TICKS.map((t) => <text key={t.y} x="2018.500" y={t.y + 3} textAnchor="end">{t.label}</text>)}
      </g>
      <rect x="2031.500" y="165.500" width="247" height="53" fill="#fff" stroke="#000" />
      <path d="M2042 178.500H2065" stroke="#00f" strokeWidth="1.250" />
      <path d="M2042 202.500H2065" stroke="#f00" strokeWidth="1.250" />
      <g fontSize="15.500" fill="#000">
        <text x="2082" y="184" textLength="189" lengthAdjust="spacingAndGlyphs">/joint_states/position[0]</text>
        <text x="2082" y="208" textLength="189" lengthAdjust="spacingAndGlyphs">/joint_states/position[1]</text>
      </g>
    </svg>
  );
}

const TAB_MARKS = ["w", "m", "f", "m", "f", "f", "m", "f", "m", "b", "g", "f", "g", "w", "b", "m"];

function BrowserTabs() {
  return (
    <svg width="1216" height="10" viewBox="1984 24 1216 10" className="shrink-0 bg-[#31312d]">
      {TAB_MARKS.map((m, i) => {
        const x = 2006 + i * 70;
        return (
          <g key={i}>
            <path d={`M${x} 34L${x + 4} 26H${x + 61}L${x + 65} 34Z`} fill={i === 10 ? "#dddcda" : "#bdbcba"} />
            {m === "m" && <path d={`M${x + 9} 33H${x + 25}`} stroke="#20285f" strokeWidth="3" strokeDasharray="4 2" />}
            {m === "f" && <path d={`M${x + 12} 33H${x + 20}`} stroke="#2c3c98" strokeWidth="2.500" strokeDasharray="3 1" />}
            {m === "b" && <path d={`M${x + 9} 33H${x + 22}`} stroke="#5c88cc" strokeWidth="2.500" strokeDasharray="3 1" />}
            {m === "g" && <path d={`M${x + 8} 34Q${x + 15} 28 ${x + 22} 34Z`} fill="#151515" />}
          </g>
        );
      })}
      <path d="M3129 32H3155V34H3129Z" fill="#aaa9a7" />
      <rect x="3170.500" y="27.500" width="22" height="10" rx="2" fill="#3a3935" stroke="#4b4a46" />
      <path d="M3176 34Q3181 29 3186 34Z" fill="#ddd" />
    </svg>
  );
}

function PlotToolbar() {
  const sep = "h-6 w-px shrink-0 bg-[#d6d4d1]";
  return (
    <div className="mt-[27px] flex h-[34px] shrink-0 items-center">
      <svg width="21" height="24" viewBox="0 0 21 24" className="-ml-[2px] shrink-0">
        <path d="M3 2H6V8H3Z" fill="#fff" stroke="#c65" />
        <path d="M3 11L10.500 4L17 11V23H3Z" fill="#f6ead0" stroke="#99917f" />
        <path d="M7 23V14Q7 11 10 11T13 14V23Z" fill="#f4b35b" stroke="#a05d20" />
        <path d="M0 12L10.500 2L20.500 12" fill="none" stroke="#b01a3c" strokeWidth="2.600" />
      </svg>
      {["M12 6L7 11L12 16V12.500H16V9.500H12Z", "M10 6L15 11L10 16V12.500H6V9.500H10Z"].map((d, i) => (
        <svg key={i} width="22" height="22" viewBox="0 0 22 22" className="ml-[14px] shrink-0">
          <circle cx="11" cy="11" r="10.300" fill="#14859a" />
          <ellipse cx="9" cy="7" rx="6" ry="4.500" fill="#4cb1c0" />
          <path d={d} fill="#fff" stroke="#fff" />
        </svg>
      ))}
      <i className={sep + " ml-[13px]"} />
      <svg width="22" height="22" viewBox="0 0 22 22" className="ml-[11px] shrink-0" fill="#1c6d8e">
        <path d="M11 0L14 4H12V10H18V8L22 11L18 14V12H12V18H14L11 22L8 18H10V12H4V14L0 11L4 8V10H10V4H8Z" />
      </svg>
      <div className="ml-[9px] flex h-[34px] w-[34px] shrink-0 items-center justify-center rounded border border-[#b3b0ac] bg-[#e6e5e3]">
        <svg width="24" height="24" viewBox="0 0 24 24">
          <rect x="6" y="9" width="16" height="13" fill="#eefafa" stroke="#9fd4da" />
          <path d="M14 9L22 4" stroke="#eaa253" strokeWidth="4" strokeLinecap="round" />
          <circle cx="8.500" cy="13" r="7" fill="#9fd0d4" />
          <rect x="5.500" y="9" width="8" height="9" fill="#f1fafa" stroke="#2a8a93" />
          <path d="M7 11.500H12M7 13.500H12M7 15.500H12" stroke="#2a8a93" />
        </svg>
      </div>
      <i className={sep + " ml-[6px]"} />
      <svg width="24" height="24" viewBox="0 0 24 24" className="ml-[10px] shrink-0">
        <rect x="2.500" y="2.500" width="19" height="19" fill="#f0f0ef" stroke="#555" />
        <rect x="5.500" y="5.500" width="13" height="13" fill="#dfe8f6" stroke="#3563ab" strokeWidth="1.600" />
        <rect x="7" y="8" width="10" height="8" fill="#fff" />
        <path d="M8 13L10.500 10.500L13 13.500L16 11" fill="none" stroke="#333" />
        <path d="M12 0L15 4H9ZM12 24L15 20H9ZM0 12L4 9V15ZM24 12L20 9V15Z" fill="#62d04e" stroke="#2b8a20" strokeWidth=".7" />
      </svg>
      <svg width="24" height="23" viewBox="0 0 24 23" className="ml-[11px] shrink-0">
        <path d="M1 1H23V22H3L1 20Z" fill="#17506f" stroke="#0d3b55" />
        <rect x="5" y="1.500" width="14" height="9" fill="#c9c6bd" />
        <path d="M7 4H17M7 7H17" stroke="#55677a" />
        <rect x="7" y="14.500" width="10" height="7.500" fill="#9eb0ba" />
        <rect x="9" y="16" width="3" height="6" fill="#17394d" />
      </svg>
      <svg width="21" height="20" viewBox="0 0 21 20" className="ml-[13px] shrink-0">
        <rect x="2.500" y="5.500" width="13" height="12" fill="#fafafa" stroke="#888" />
        <path d="M2 10L7 17L20 1" fill="none" stroke="#07cf22" strokeWidth="3.400" />
      </svg>
    </div>
  );
}

function RightScreen() {
  return (
    <div className="flex h-[1080px] w-[1280px] shrink-0 flex-col bg-black">
      <TopPanel />
      <div className="flex h-[1000px] shrink-0 bg-[#f2f1f0]">
        <Launcher
          items={RIGHT_ITEMS}
          folded={3}
          className="h-[1000px] w-16 bg-[linear-gradient(to_bottom,#041846_0px,#0a2158_66px,#3f5288_68px,#53659a_84px,#4b5e92_200px,#4b5d90_100%)]"
        />
        <div className="flex w-[1216px] flex-col">
          <BrowserTabs />
          <div className="mt-[5px] flex h-[20px] shrink-0 items-center text-[14px]"><Fit w={50} className="-ml-[9px]">MatPlot</Fit></div>
          <div className="mt-[3px] flex h-[25px] shrink-0 items-center">
            <Fit w={34} className="-ml-[23px]">Topic</Fit>
            <div className={FIELD + " ml-[2px] h-[25px] w-[767px] pl-[3px]"}><Fit w={165}>/joint_states/position[1]</Fit></div>
            <div className={BTN + " ml-[2px] h-[25px] w-[36px]"}>
              <svg width="16" height="16" viewBox="0 0 16 16"><path d="M5.500.7H10.500V5.500H15.300V10.500H10.500V15.300H5.500V10.500H.7V5.500H5.500Z" fill="#b6d13b" stroke="#5e9424" /></svg>
            </div>
            <div className={BTN + " ml-[2px] h-[25px] w-[56px]"}>
              <svg width="29" height="7" viewBox="0 0 29 7" className="ml-[12px]">
                <rect x=".6" y=".6" width="15" height="5.300" fill="#e3554c" stroke="#a82a26" />
                <path d="M22.500 2H28.500L25.500 6.500Z" fill="#999" stroke="#555" strokeWidth=".8" />
              </svg>
            </div>
          </div>
          <PlotToolbar />
          <div className="h-[9px] shrink-0" />
          <Plot />
        </div>
      </div>
    </div>
  );
}

export default function App() {
  return (
    <div className="relative flex h-[1080px] w-[3200px] overflow-hidden bg-black font-['Noto_Sans',sans-serif] text-[14px] leading-[19px] text-[#3f3f3f]">
      <LeftScreen />
      <RightScreen />
    </div>
  );
}
